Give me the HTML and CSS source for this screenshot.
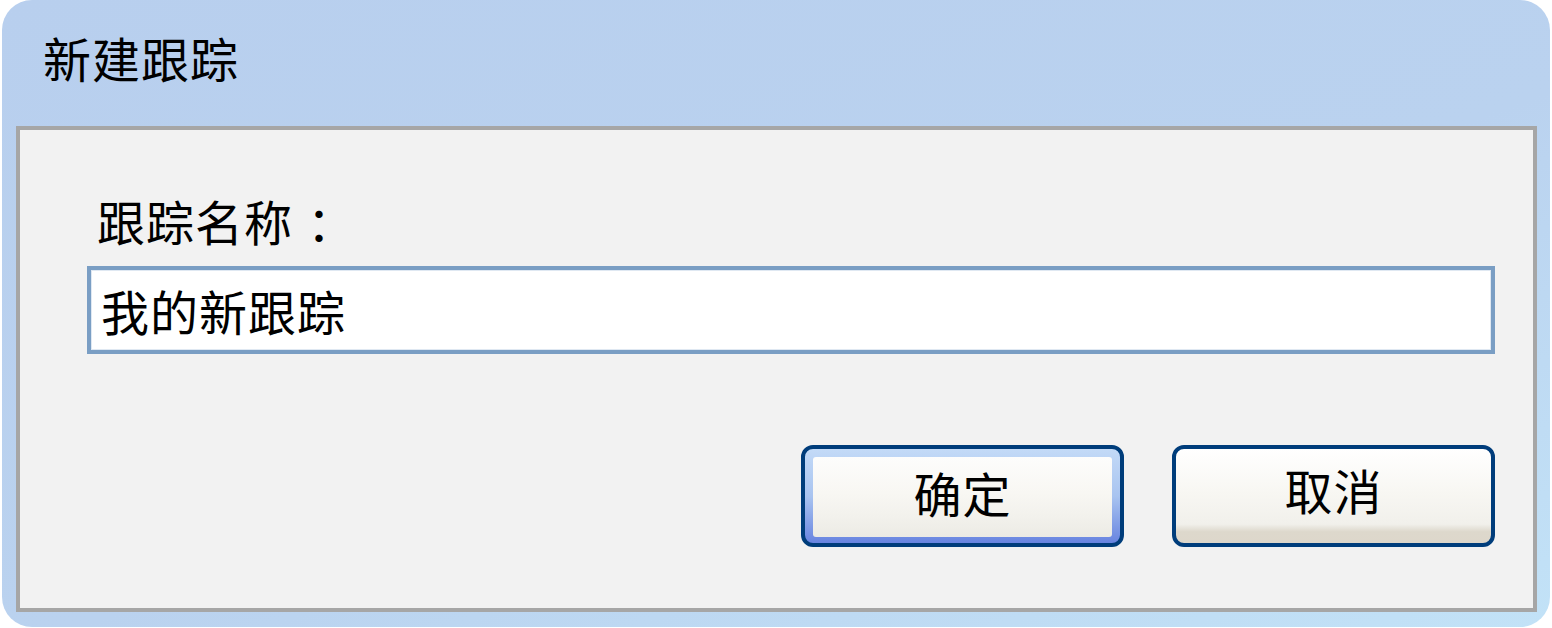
FILE: index.html
```html
<!DOCTYPE html>
<html lang="zh-CN">
<head>
<meta charset="utf-8">
<title>新建跟踪</title>
<link rel="stylesheet" href="styles.css">
</head>
<body>
<div class="window">
  <div class="titlebar">新建跟踪</div>
  <div class="panel">
    <div class="label">跟踪名称<span class="colon">：</span></div>
    <div class="input">我的新跟踪</div>
    <div class="buttons">
      <div class="btn btn-default"><span class="face">确定</span></div>
      <div class="btn"><span class="face">取消</span></div>
    </div>
  </div>
</div>
</body>
</html>
```

FILE: styles.css
```css
html, body {
  margin: 0;
  padding: 0;
  background: #ffffff;
}
body {
  font-family: "Noto Sans CJK SC", "Noto Sans", sans-serif;
  color: #000;
}
.window {
  margin-left: 2px;
  width: 1548px;
  height: 627px;
  box-sizing: border-box;
  border-radius: 30px;
  background: linear-gradient(160deg, #b8cfee 0%, #bad2ef 55%, #c2e2f7 100%);
  display: flex;
  flex-direction: column;
  padding: 0 13px 0 14px;
}
.titlebar {
  height: 126px;
  box-sizing: border-box;
  padding-left: 27px;
  padding-bottom: 12px;
  font-size: 48px;
  line-height: 114px;
  letter-spacing: 1px;
}
.panel {
  height: 486px;
  box-sizing: border-box;
  border: 4px solid #a6a6a6;
  background: #f2f2f2;
  display: flex;
  flex-direction: column;
  padding: 62px 38px 0 67px;
}
.label {
  font-size: 48px;
  line-height: 56px;
  letter-spacing: 1px;
  padding-left: 10px;
  height: 56px;
  margin-bottom: 2px;
}
.colon {
  display: inline-block;
  margin-left: 14px;
}
.input {
  margin-top: 16px;
  height: 88px;
  box-sizing: border-box;
  border: 4px solid #7a9ec4;
  box-shadow: inset 0 0 0 1px #dfe8f2;
  background: #ffffff;
  font-size: 48px;
  line-height: 80px;
  letter-spacing: 1px;
  padding-left: 10px;
}
.buttons {
  margin-top: 91px;
  display: flex;
  justify-content: flex-end;
  gap: 48px;
}
.btn {
  width: 323px;
  height: 102px;
  box-sizing: border-box;
  border: 4px solid #003d7b;
  border-radius: 12px;
  background: linear-gradient(#ffffff 0%, #f8f7f3 45%, #f1f0eb 80%, #ddd8cc 88%, #ddd7cb 100%);
  display: flex;
  overflow: hidden;
}
.btn .face {
  flex: 1;
  display: flex;
  align-items: center;
  justify-content: center;
  font-size: 48px;
  letter-spacing: 1px;
  padding-bottom: 14px;
}
.btn-default {
  padding: 8px 8px 6px 8px;
  background: linear-gradient(#c3daf7 0%, #a9c4f0 50%, #6884e0 100%);
}
.btn-default .face {
  border-radius: 3px;
  padding-bottom: 10px;
  background: linear-gradient(#fdfdfc 0%, #f8f7f3 45%, #f2f1ec 75%, #ecebe4 100%);
}
```
